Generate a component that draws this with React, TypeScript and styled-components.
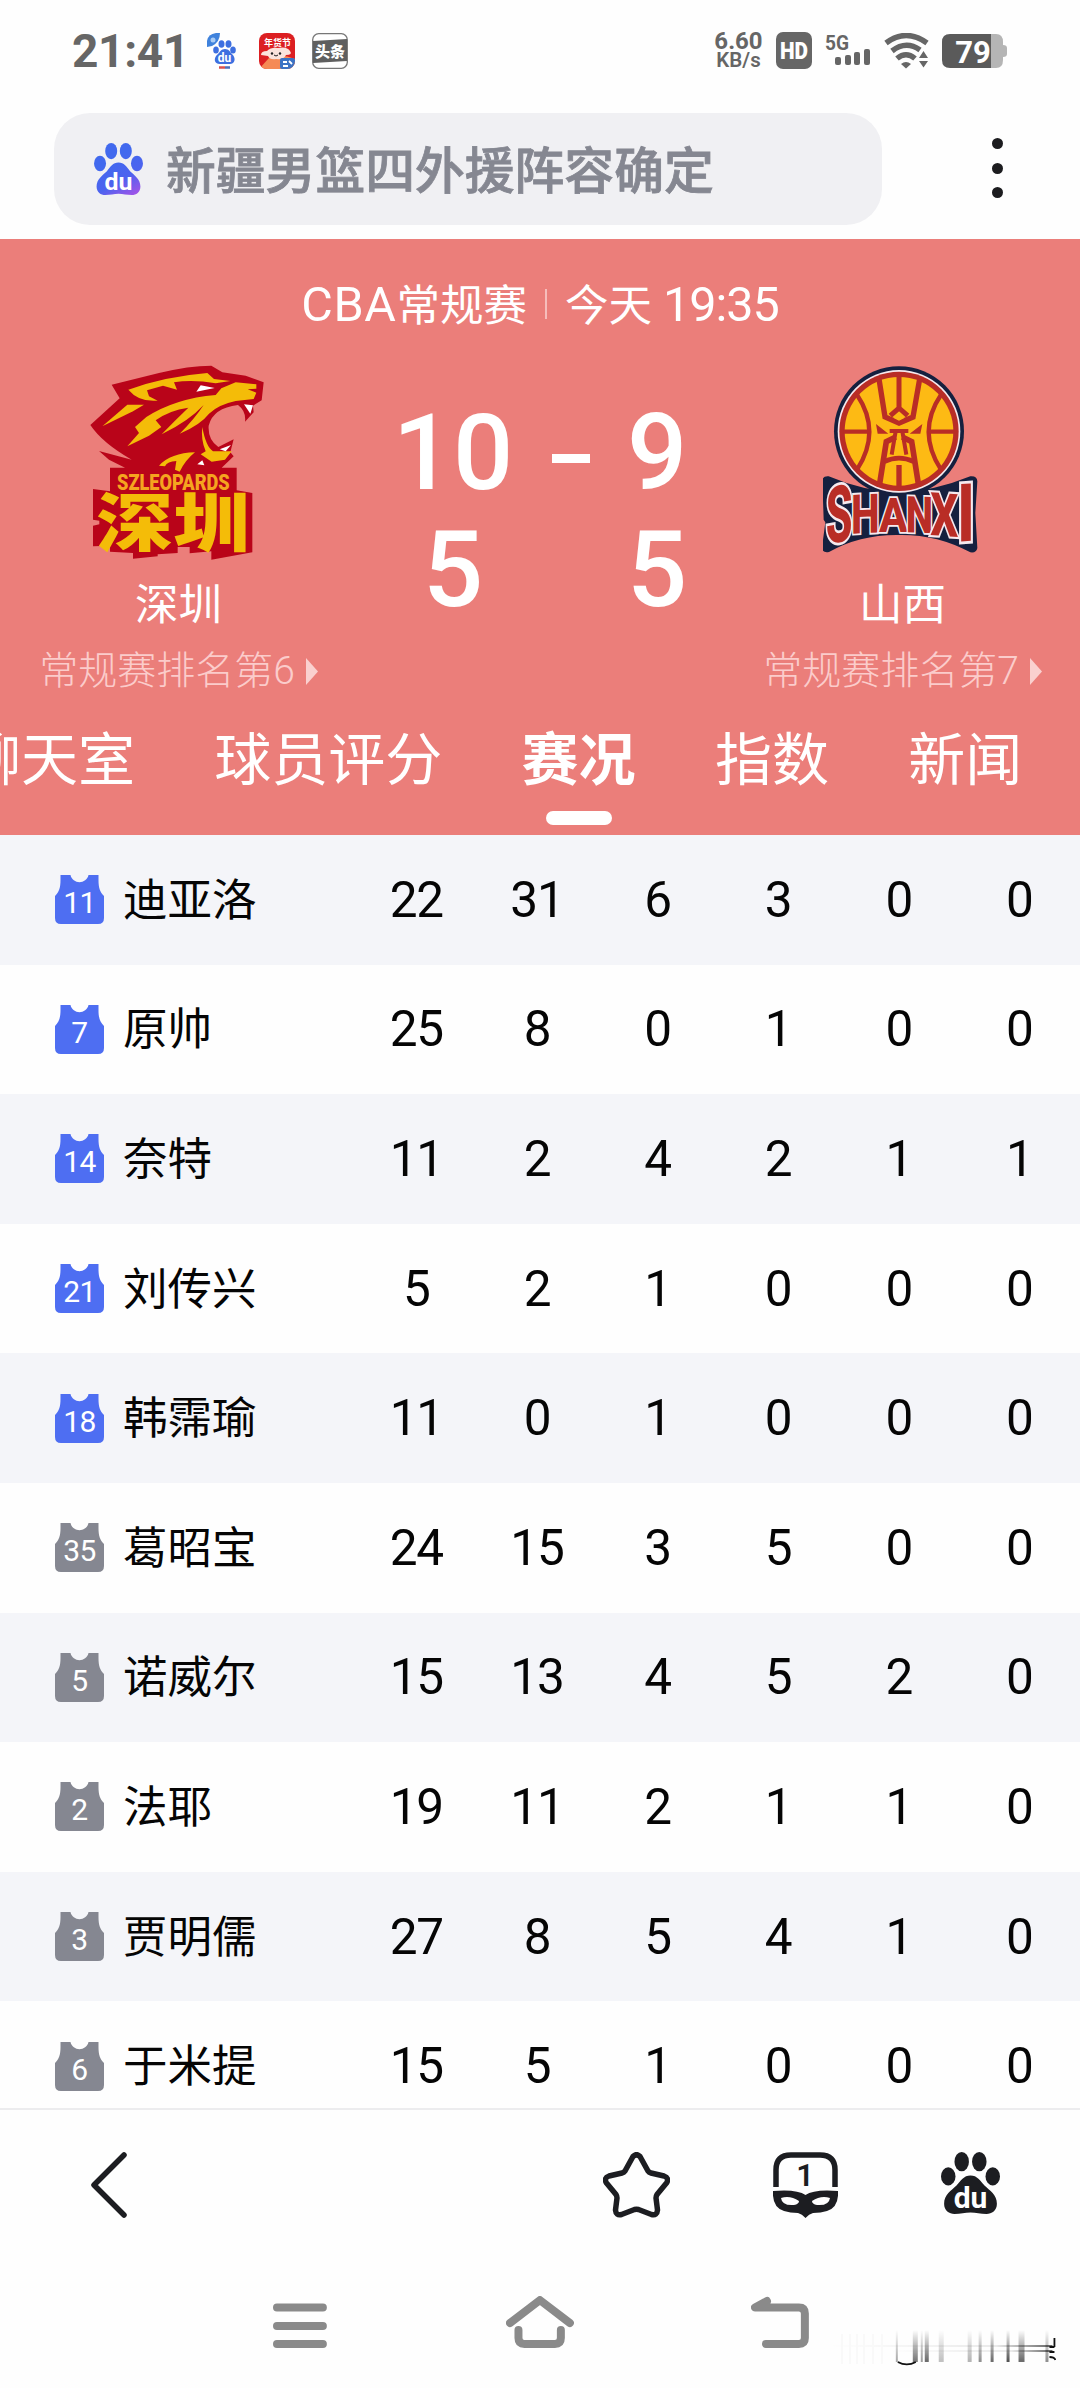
import styled, { createGlobalStyle, css } from "styled-components";

const latin = `Roboto, "Noto Sans CJK SC", sans-serif`;

const GlobalStyle = createGlobalStyle`
  * {
    box-sizing: border-box;
  }

  body {
    margin: 0;
    background: #fefefe;
    font-family: ${latin};
  }
`;

const Screen = styled.div`
  display: flex;
  flex-direction: column;
  width: 1080px;
  height: 2388px;
  overflow: hidden;
  background: #fefefe;
`;

/* ---------- status bar ---------- */

const StatusBar = styled.div`
  display: flex;
  align-items: center;
  height: 113px;
  padding: 0 72px 12px;
  color: #666;
`;

const Clock = styled.div`
  width: 134px;
  font-size: 46px;
  font-weight: 700;
  letter-spacing: -0.3px;
`;

const AppIcons = styled.div`
  display: flex;
  gap: 17px;
  flex: 1;
`;

const Speed = styled.div`
  width: 49px;
  margin-right: 13px;
  text-align: center;
  font-weight: 700;
  font-size: 24px;
  line-height: 20px;

  small {
    display: block;
    font-size: 20.5px;
    font-weight: 600;
    line-height: 19px;
  }
`;

const StatusIcons = styled.div`
  display: flex;
  align-items: center;
  gap: 13px;
`;

/* ---------- search ---------- */

const SearchBar = styled.div`
  display: flex;
  align-items: center;
  justify-content: space-between;
  height: 126px;
  padding: 0 72px 14px 54px;
`;

const SearchBox = styled.div`
  display: flex;
  align-items: center;
  gap: 23px;
  width: 828px;
  height: 112px;
  padding-left: 40px;
  border-radius: 36px;
  background: #f0f0f3;
  color: #858791;
  font-size: 49.8px;
  font-weight: 500;
  white-space: nowrap;
`;

const Query = styled.span`
  padding-bottom: 4px;
  -webkit-text-stroke: 0.8px #858791;
`;

const More = styled.div`
  display: flex;
  flex-direction: column;
  gap: 13.4px;
  width: 16px;
  margin-bottom: 2px;

  i {
    width: 11px;
    height: 11px;
    border-radius: 50%;
    background: #1c1c1f;
  }
`;

/* ---------- match header ---------- */

const Hero = styled.header`
  display: flex;
  flex-direction: column;
  height: 596px;
  flex: none;
  background: #eb7e7a;
  color: #fff;
`;

const MatchInfo = styled.div`
  display: flex;
  align-items: center;
  justify-content: center;
  height: 124px;
  padding-top: 6px;
  font-size: 43.5px;
  white-space: pre;
`;

const League = styled.span`
  padding-bottom: 3px;
`;

const Latin = styled.span<{ $tight?: number }>`
  font-size: 48.5px;
  letter-spacing: ${(p) => p.$tight ?? 0}px;
`;

const Divider = styled.i`
  width: 2px;
  height: 30px;
  margin: 0 18px;
  background: #f6bdbb;
`;

const Board = styled.div`
  display: grid;
  grid-template-columns: 357px 368px 355px;
  height: 353px;
`;

const Team = styled.div`
  display: flex;
  flex-direction: column;
  align-items: center;

  > svg {
    flex: none;
  }
`;

const TeamName = styled.div`
  height: 50px;
  margin-top: 18px;
  font-size: 43.5px;
  line-height: 50px;
`;

const Rank = styled.div`
  display: flex;
  align-items: center;
  gap: 11px;
  margin-top: 17px;
  font-size: 39px;
  font-weight: 300;
  line-height: 46px;
  white-space: nowrap;
  color: #fbcccb;
`;

const Score = styled.div`
  display: grid;
  grid-template-columns: 110px 94px 110px;
  grid-auto-rows: 117px;
  align-content: start;
  align-items: center;
  justify-items: center;
  padding: 32px 0 0 41px;
  font-size: 106px;
  font-weight: 500;
  line-height: 117px;
`;

const Dash = styled.i`
  width: 38px;
  height: 9px;
  margin: 9px 0 0 32px;
  background: #fff;
`;

const Tabs = styled.nav`
  display: flex;
  gap: 79.3px;
  height: 119px;
  margin-left: -36px;
`;

const Tab = styled.div<{ $active?: boolean }>`
  display: flex;
  flex-direction: column;
  align-items: center;
  flex: none;
  padding-top: 3px;
  font-size: 57px;
  line-height: 84px;
  white-space: nowrap;

  ${(p) =>
    p.$active &&
    css`
      font-weight: 700;

      &::after {
        content: "";
        width: 66px;
        height: 14px;
        margin-top: 8px;
        border-radius: 7px;
        background: #fff;
      }
    `}
`;

/* ---------- player table ---------- */

const Table = styled.main`
  height: 1273px;
  flex: none;
  overflow: hidden;
`;

const Row = styled.div`
  display: grid;
  grid-template-columns: 49px 252px repeat(6, 120.6px);
  align-items: center;
  height: 129.6px;
  padding-left: 55px;
  background: #fefefe;
  color: #050505;

  &:nth-child(odd) {
    background: #f4f5f9;
  }
`;

const Player = styled.div`
  padding: 0 0 7px 19px;
  font-size: 44.5px;
`;

const Stat = styled.div`
  text-align: center;
  font-size: 49.5px;
  letter-spacing: -1.3px;
`;

/* ---------- bottom bars ---------- */

const ToolBar = styled.footer`
  display: flex;
  align-items: center;
  height: 152px;
  flex: none;
  padding: 0 80px 0 86px;
  border-top: 2px solid #ececee;
`;

const ToolGroup = styled.div`
  display: flex;
  gap: 103px;
  margin-left: auto;
`;

const NavBar = styled.div`
  display: flex;
  align-items: flex-end;
  flex: 1;
  padding: 0 24px 21px 273px;
`;

const NavIcon = styled.svg<{ $left?: number }>`
  margin-left: ${(p) => p.$left ?? 0}px;
  margin-bottom: 19px;
  fill: none;
  stroke: #8a8a8a;
  stroke-width: 8;
  stroke-linecap: round;
  stroke-linejoin: round;
`;

const Paw = ({
  width,
  height,
  fill,
  text = "#fff",
}: {
  width: number;
  height: number;
  fill: string;
  text?: string;
}) => (
  <svg
    width={width}
    height={height}
    viewBox="0 0 57 61"
    preserveAspectRatio="none"
    fill={fill}
  >
    <defs>
      <linearGradient id="paw" gradientUnits="userSpaceOnUse" x1="20" y1="20" x2="44" y2="61">
        <stop offset="0" stopColor="#4169ee" />
        <stop offset=".55" stopColor="#4d63ef" />
        <stop offset="1" stopColor="#9b55e8" />
      </linearGradient>
    </defs>
    <ellipse cx="20" cy="9.5" rx="7" ry="9.5" />
    <ellipse cx="37" cy="9.5" rx="7" ry="9.5" />
    <ellipse cx="7" cy="24" rx="7" ry="9" />
    <ellipse cx="50" cy="24" rx="7" ry="9" />
    <path d="M28.500 23C35 23 38 28 42 33C47 38 54 42 54 51C54 58 49 61 44 61C38 61 34 59.500 28.500 59.500C23 59.500 19 61 13 61C8 61 3 58 3 51C3 42 10 38 15 33C19 28 22 23 28.500 23Z" />
    <text
      x="28.500"
      y="55"
      textAnchor="middle"
      fontFamily="Roboto, sans-serif"
      fontWeight="700"
      fontSize="29"
      fill={text}
    >
      du
    </text>
  </svg>
);

const BaiduAppIcon = () => (
  <svg width="36" height="36" viewBox="0 0 36 36">
    <path d="M1 14V8Q2 1 10 0H14Q14 9 6 13Z" fill="#3f82dc" />
    <circle cx="7" cy="7" r="2.500" fill="#a9cbf4" />
    <g fill="#3d6fe0">
      <ellipse cx="15.500" cy="11" rx="3" ry="3.800" />
      <ellipse cx="22.500" cy="11" rx="3" ry="3.800" />
      <ellipse cx="10" cy="17" rx="2.800" ry="3.500" />
      <ellipse cx="27" cy="17" rx="2.800" ry="3.500" />
      <path d="M19 16C23 16 24 19 26 21C31 26 28 31 24 31H14C8 31 7 25 12 21C14 19 15 16 19 16Z" />
    </g>
    <text x="18.500" y="29" textAnchor="middle" fontFamily="Roboto" fontWeight="700" fontSize="12" fill="#fff">
      du
    </text>
    <path d="M13 34.500H19" stroke="#d8504e" strokeWidth="2.500" />
    <path d="M19 34.500H24" stroke="#4a6fb8" strokeWidth="2.500" />
  </svg>
);

const FestivalAppIcon = () => (
  <svg width="36" height="36" viewBox="0 0 36 36">
    <defs>
      <clipPath id="fest">
        <rect width="36" height="36" rx="8" />
      </clipPath>
    </defs>
    <g clipPath="url(#fest)">
      <rect width="36" height="36" fill="#dc1f22" />
      <path d="M0 36L10 25Q22 20 36 26V36Z" fill="#f58a55" />
      <path d="M2 22Q2 18 8 18Q12 14 19 15Q28 13 31 18Q34 22 27 22Q25 27 17 26Q11 27 9 23Z" fill="#fbe3dc" />
      <circle cx="13" cy="20.500" r="1.200" fill="#222" />
      <circle cx="21" cy="20.500" r="1.200" fill="#222" />
      <path d="M15 22Q17 24 19 22" stroke="#222" fill="none" />
      <text x="18.500" y="13" textAnchor="middle" fontFamily="Noto Sans CJK SC" fontWeight="700" fontSize="9" fill="#fff">
        年货节
      </text>
      <rect x="21" y="25" width="15" height="11" rx="2" fill="#3b72c4" />
      <path d="M24 29H28M30 28L33 31M24 33H29" stroke="#fff" strokeWidth="1.800" />
    </g>
  </svg>
);

const ToutiaoIcon = () => (
  <svg width="36" height="36" viewBox="0 0 36 36">
    <rect x=".7" y=".7" width="34.600" height="34.600" rx="6" fill="#fff" stroke="#777" strokeWidth="1.300" />
    <path d="M1 8L35 6V28L1 30Z" fill="#5f5f5f" />
    <text x="18" y="23.500" textAnchor="middle" fontFamily="Noto Sans CJK SC" fontWeight="900" fontSize="15" fill="#fff">
      头条
    </text>
  </svg>
);

const HdIcon = () => (
  <svg width="36" height="37" viewBox="0 0 36 37">
    <rect width="36" height="37" rx="7" fill="#666" />
    <text
      x="4"
      y="27"
      textLength="28"
      lengthAdjust="spacingAndGlyphs"
      fontFamily="Roboto"
      fontWeight="900"
      fontSize="24"
      fill="#fff"
    >
      HD
    </text>
  </svg>
);

const SignalIcon = () => (
  <svg width="46" height="36" viewBox="0 0 46 36">
    <text x="0" y="17" fontFamily="Roboto" fontWeight="700" fontSize="20" textLength="24" lengthAdjust="spacingAndGlyphs" fill="#666">
      5G
    </text>
    <g fill="#666">
      <rect x="10" y="24" width="6" height="8" rx="2" />
      <rect x="20" y="22" width="6" height="10" rx="2" />
      <rect x="29" y="19" width="6" height="13" rx="2" />
      <rect x="39" y="16" width="6" height="16" rx="2" />
    </g>
  </svg>
);

const WifiIcon = () => (
  <svg width="45" height="36" viewBox="0 0 45 36">
    <g fill="none" stroke="#666" strokeWidth="5.500">
      <path d="M2 10Q22 -5 43 10" />
      <path d="M8 18Q22 7 36 17" />
      <path d="M13 25.500Q22 18 31 25.500" />
    </g>
    <path d="M17 31Q22 27 27 31L22 35.500Z" fill="#666" />
    <path d="M35 25L39.500 18L44 25ZM35 28H44L39.500 34.500Z" fill="#666" />
  </svg>
);

const BatteryIcon = () => (
  <svg width="66" height="34" viewBox="0 0 66 34">
    <path d="M49 0H54Q61 0 61 8V11Q65 11 65 14V20Q65 23 61 23V26Q61 34 54 34H49Z" fill="#b5b5b5" />
    <path d="M8 0H49V34H8Q0 34 0 26V8Q0 0 8 0Z" fill="#5a5a5a" />
    <text x="31" y="28.500" textAnchor="middle" fontFamily="Roboto" fontWeight="700" fontSize="31" fill="#fff">
      79
    </text>
  </svg>
);

const ShenzhenLogo = () => (
  <svg width="180" height="200" viewBox="90 70 540 600">
    <path
      fill="#b90419"
      d="M158 135L300 100Q390 78 457 78L490 98L560 108L614 128L608 182L582 198L584 218L558 246Q562 215 537 196Q462 205 449 258Q446 300 478 322L524 299L514 338L524 350L488 384H533V452L580 460V638L457 660V635L392 641V622H356V640L296 644V650L222 657V640L153 636V618L102 620V558L121 554V543L102 540V448L153 455V384H198L150 360L120 334L218 360Q130 310 94 256L182 176Z"
    />
    <g fill="#f4bc08">
      <path d="M208 150Q320 110 445 100L465 118L514 124L470 131Q400 118 345 128L354 150L312 138L264 152L270 170L296 183Q240 188 208 150Z" />
      <path d="M487 146L530 128L592 134V147L566 149L592 159L584 178L530 184Q478 195 450 222Q425 255 362 282Q405 240 434 196Q390 244 308 284Q350 240 388 204Q330 212 290 242L307 262L270 288L205 320L240 280L228 262L262 232Q350 176 470 166Z" />
      <path d="M205 195H255L222 215L130 260Z" />
      <path d="M430 262Q440 320 462 335H518L498 360L458 366L425 344L440 335Q425 300 430 262Z" />
      <path d="M300 378Q335 340 408 338Q380 360 362 396L348 390L352 364Q325 365 318 380Z" />
    </g>
    <g fill="#fff">
      <path d="M412 156L425 137L467 145Z" />
      <path d="M555 194L582 197L574 222Z" />
      <path d="M482 329L516 316L500 335Z" />
      <path d="M415 374L430 362L436 377Z" />
    </g>
    <text
      x="174"
      y="452"
      textLength="338"
      lengthAdjust="spacingAndGlyphs"
      fontFamily="Roboto, sans-serif"
      fontWeight="900"
      fontSize="66"
      fill="#f5a51f"
    >
      SZLEOPARDS
    </text>
    <text
      x="112"
      y="620"
      textLength="460"
      lengthAdjust="spacingAndGlyphs"
      fontFamily="Noto Sans CJK SC, sans-serif"
      fontWeight="900"
      fontSize="190"
      fill="#f4bc08"
    >
      深圳
    </text>
  </svg>
);

// every letter gets its own height so the word follows the banner
const banner = [
  { ch: "S", x: 136, w: 80, base: 614, h: 168, skew: 10 },
  { ch: "H", x: 212, w: 86, base: 582, h: 116, skew: 3 },
  { ch: "A", x: 296, w: 86, base: 576, h: 104, skew: 0 },
  { ch: "N", x: 376, w: 82, base: 578, h: 108, skew: -2 },
  { ch: "X", x: 450, w: 84, base: 586, h: 128, skew: -4 },
  { ch: "I", x: 530, w: 54, base: 606, h: 172, skew: 4 },
];

const ShanxiLogo = () => (
  <svg width="160" height="200" viewBox="128 70 480 600">
    <path
      fill="#15203f"
      d="M126 425Q126 408 145 410Q250 455 356 458Q460 455 570 410Q590 408 591 425L585 520L591 625Q588 641 570 638Q470 584 356 586Q240 584 146 637Q126 641 125 624L135 548L130 540Z"
    />
    <circle cx="356" cy="275" r="195" fill="#15203f" />
    <circle cx="356" cy="275" r="184" fill="#f6e9ee" />
    <circle cx="356" cy="275" r="179" fill="#b92d26" />
    <circle cx="356" cy="275" r="163" fill="#fdba14" />
    <g fill="none" stroke="#b92d26" strokeWidth="13">
      <path d="M230 165Q304 275 230 390" />
      <path d="M482 165Q408 275 482 390" />
      <path d="M190 276H268M444 276H524" />
      <path d="M296 118L314 232L356 250L398 232L418 118" strokeWidth="16" />
      <path d="M356 100V205L330 228M356 205L382 228" strokeWidth="15" />
      <path d="M328 274H384" strokeWidth="12" />
      <path d="M298 432L318 306L346 292M414 432L394 306L366 292" strokeWidth="17" />
      <path d="M346 275L334 345M366 275L378 345" strokeWidth="12" />
      <path d="M312 366Q356 345 400 366" strokeWidth="14" />
      <path d="M356 376V440" strokeWidth="16" />
    </g>
    <path d="M287 253L324 282H292ZM426 253L388 282H420Z" fill="#b92d26" />
    <path d="M356 222L372 235L356 243L340 235Z" fill="#fdba14" />
    {banner.map((l) => (
      <text
        key={l.ch}
        transform={`translate(${l.x} ${l.base}) skewY(${l.skew * -1}) scale(1 ${l.h / 71})`}
        textLength={l.w}
        lengthAdjust="spacingAndGlyphs"
        fontFamily="Roboto, sans-serif"
        fontWeight="800"
        fontSize="100"
        fill="#b92d26"
        stroke="#f6e9ee"
        strokeWidth="7"
        paintOrder="stroke"
      >
        {l.ch}
      </text>
    ))}
  </svg>
);

const Arrow = () => (
  <svg width="12" height="27" viewBox="0 0 12 27">
    <path d="M0 0L12 13.500L0 27Z" fill="#fad0cf" />
  </svg>
);

const Jersey = ({ no, color }: { no: number; color: string }) => (
  <svg width="49" height="49" viewBox="0 0 49 49">
    <path
      fill={color}
      d="M5.500 0H15.500C17.500 9.500 31.500 9.500 33.500 0H43.500V5C43.500 13 45 17 49 21V43Q49 49 43 49H6Q0 49 0 43V21C4 17 5.500 13 5.500 5Z"
    />
    <text x="24.500" y="38" textAnchor="middle" fontFamily="Roboto" fontSize="30" letterSpacing="-.5" fill="#fff">
      {no}
    </text>
  </svg>
);

const StarIcon = () => (
  <svg width="67" height="66" viewBox="0 0 67 66" fill="none" stroke="#1c1d21" strokeWidth="5.500" strokeLinejoin="round">
    <path d="M30 4.500Q33.500 1 37 4.500L45 19Q46 20.500 48 21L61 24Q66.500 26 63.500 31L54 42.500Q53 44 53 46L54.500 58Q54 64 48.500 62.500L35.500 57.500Q33.500 57 31.500 57.500L18.500 62.500Q13 64 12.500 58L14 46Q14 44 13 42.500L3.500 31Q.5 26 6 24L19 21Q21 20.500 22 19Z" />
  </svg>
);

const MaskIcon = () => (
  <svg width="65" height="66" viewBox="0 0 65 66">
    <path d="M3 35V18Q3 3 18 3H47Q62 3 62 18V35" fill="none" stroke="#1c1d21" strokeWidth="5.500" />
    <path
      fill="#1c1d21"
      fillRule="evenodd"
      d="M0 39Q24 37 32.500 43Q41 37 65 39Q66 55 54 59Q48 61 40 61Q36 62 32.500 66Q29 62 25 61Q17 61 11 59Q-1 55 0 39ZM8 46Q9 54 21 53Q26 52 26 49Q17 43 8 46ZM57 46Q56 54 44 53Q39 52 39 49Q48 43 57 46Z"
    />
    <text x="32" y="34" textAnchor="middle" fontFamily="Roboto" fontWeight="600" fontSize="31" fill="#1c1d21">
      1
    </text>
  </svg>
);

const streaks = [
  [67, 2, 0.35],
  [84, 5, 0.55],
  [92, 2, 0.4],
  [96, 4, 0.6],
  [110, 5, 0.25],
  [139, 4, 0.3],
  [150, 3, 0.45],
  [162, 3, 0.6],
  [178, 3, 0.7],
  [190, 6, 0.6],
  [217, 3, 0.45],
];

const StreakMark = styled.svg`
  margin-left: 20px;
`;

const Streaks = () => (
  <StreakMark width="228" height="37" viewBox="0 0 228 37">
    <defs>
      <linearGradient id="fadeUp" x1="0" y1="0" x2="0" y2="1">
        <stop offset="0" stopColor="#000" stopOpacity="0" />
        <stop offset="1" stopColor="#000" />
      </linearGradient>
      <linearGradient id="fadeLeft" x1="0" y1="0" x2="1" y2="0">
        <stop offset="0" stopColor="#000" stopOpacity="0" />
        <stop offset=".75" stopColor="#000" stopOpacity=".08" />
        <stop offset="1" stopColor="#000" stopOpacity=".6" />
      </linearGradient>
    </defs>
    <rect x="0" y="15" width="224" height="2" fill="url(#fadeLeft)" />
    <rect x="60" y="20" width="164" height="2" fill="url(#fadeLeft)" />
    {[12, 20, 27, 34, 43, 52].map((x) => (
      <rect key={x} x={x} y="4" width="2" height="30" fill="#f9f9f9" />
    ))}
    {streaks.map(([x, w, o]) => (
      <rect key={x} x={x} y="0" width={w} height="32" fill="url(#fadeUp)" opacity={o} />
    ))}
    <path d="M69 32Q78 37 87 32" fill="none" stroke="#111" strokeWidth="1.800" />
    <path d="M226 8V17M221 17H226M221 22H226M221 27Q226 27 227 30" fill="none" stroke="#111" strokeWidth="1.800" />
  </StreakMark>
);

const HOME = "#4e6ef2";
const AWAY = "#858791";

const players = [
  { no: 11, name: "迪亚洛", color: HOME, stats: [22, 31, 6, 3, 0, 0] },
  { no: 7, name: "原帅", color: HOME, stats: [25, 8, 0, 1, 0, 0] },
  { no: 14, name: "奈特", color: HOME, stats: [11, 2, 4, 2, 1, 1] },
  { no: 21, name: "刘传兴", color: HOME, stats: [5, 2, 1, 0, 0, 0] },
  { no: 18, name: "韩霈瑜", color: HOME, stats: [11, 0, 1, 0, 0, 0] },
  { no: 35, name: "葛昭宝", color: AWAY, stats: [24, 15, 3, 5, 0, 0] },
  { no: 5, name: "诺威尔", color: AWAY, stats: [15, 13, 4, 5, 2, 0] },
  { no: 2, name: "法耶", color: AWAY, stats: [19, 11, 2, 1, 1, 0] },
  { no: 3, name: "贾明儒", color: AWAY, stats: [27, 8, 5, 4, 1, 0] },
  { no: 6, name: "于米提", color: AWAY, stats: [15, 5, 1, 0, 0, 0] },
];

const tabs = ["聊天室", "球员评分", "赛况", "指数", "新闻"];

export default function App() {
  return (
    <Screen>
      <GlobalStyle />
      <StatusBar>
        <Clock>21:41</Clock>
        <AppIcons>
          <BaiduAppIcon />
          <FestivalAppIcon />
          <ToutiaoIcon />
        </AppIcons>
        <Speed>
          6.60
          <small>KB/s</small>
        </Speed>
        <StatusIcons>
          <HdIcon />
          <SignalIcon />
          <WifiIcon />
          <BatteryIcon />
        </StatusIcons>
      </StatusBar>

      <SearchBar>
        <SearchBox>
          <Paw width={49} height={52} fill="url(#paw)" />
          <Query>新疆男篮四外援阵容确定</Query>
        </SearchBox>
        <More>
          <i />
          <i />
          <i />
        </More>
      </SearchBar>

      <Hero>
        <MatchInfo>
          <Latin $tight={0.6}>CBA</Latin>
          <League>常规赛</League>
          <Divider />
          <League>今天 </League>
          <Latin $tight={-1}>19:35</Latin>
        </MatchInfo>
        <Board>
          <Team>
            <ShenzhenLogo />
            <TeamName>深圳</TeamName>
            <Rank>
              常规赛排名第6
              <Arrow />
            </Rank>
          </Team>
          <Score>
            <span>10</span>
            <Dash />
            <span>9</span>
            <span>5</span>
            <span />
            <span>5</span>
          </Score>
          <Team>
            <ShanxiLogo />
            <TeamName>山西</TeamName>
            <Rank>
              常规赛排名第7
              <Arrow />
            </Rank>
          </Team>
        </Board>
        <Tabs>
          {tabs.map((tab) => (
            <Tab key={tab} $active={tab === "赛况"}>
              {tab}
            </Tab>
          ))}
        </Tabs>
      </Hero>

      <Table>
        {players.map((p) => (
          <Row key={p.name}>
            <Jersey no={p.no} color={p.color} />
            <Player>{p.name}</Player>
            {p.stats.map((value, i) => (
              <Stat key={i}>{value}</Stat>
            ))}
          </Row>
        ))}
      </Table>

      <ToolBar>
        <svg width="46" height="70" viewBox="0 0 46 70" fill="none" stroke="#1c1d21" strokeWidth="5.500" strokeLinecap="round" strokeLinejoin="round">
          <path d="M38 5L8 35L38 65" />
        </svg>
        <ToolGroup>
          <StarIcon />
          <MaskIcon />
          <Paw width={59} height={62} fill="#1c1d21" />
        </ToolGroup>
      </ToolBar>

      <NavBar>
        <NavIcon width="54" height="52" viewBox="0 0 54 52">
          <path d="M4 11.500H50M4 30H50M4 48H50" />
        </NavIcon>
        <NavIcon $left={179} width="68" height="52" viewBox="0 0 68 52">
          <path d="M4 27L34 4L64 27M12.500 34V42Q12.500 48 18.500 48H49Q55 48 55 42V34" />
        </NavIcon>
        <NavIcon $left={177} width="58" height="52" viewBox="0 0 58 52">
          <path d="M16 5L4 11.500H48Q54 11.500 54 17.500V42Q54 48 48 48H15" />
        </NavIcon>
        <Streaks />
      </NavBar>
    </Screen>
  );
}
